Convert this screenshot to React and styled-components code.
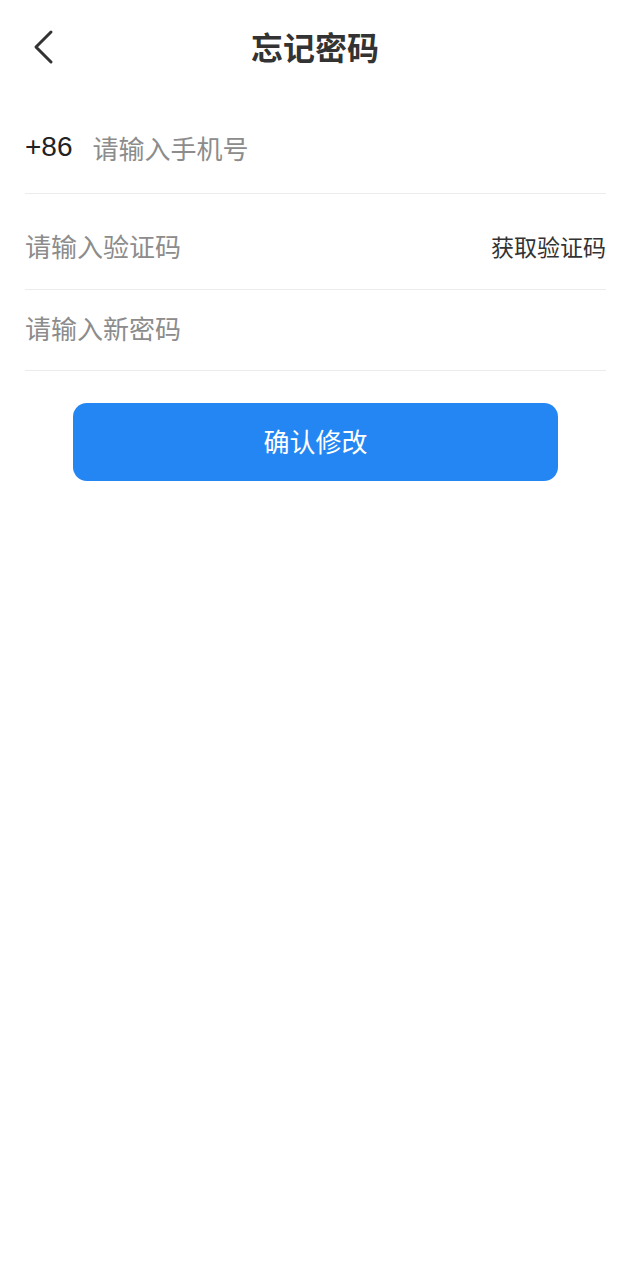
import React, { useState } from "react";
import styled, { createGlobalStyle } from "styled-components";

const GlobalStyle = createGlobalStyle`
  html, body {
    margin: 0;
    padding: 0;
    background: #fff;
    font-family: "Noto Sans CJK SC", "Noto Sans", sans-serif;
  }
`;

const Page = styled.div`
  width: 630px;
  min-height: 1280px;
  background: #fff;
`;

const Header = styled.header`
  position: relative;
  height: 96px;
  padding-bottom: 4px;
  box-sizing: border-box;
  display: flex;
  align-items: center;
  justify-content: center;
`;

const BackButton = styled.button`
  position: absolute;
  left: 24px;
  top: 23px;
  width: 40px;
  height: 48px;
  padding: 0;
  border: none;
  background: none;
  display: flex;
  align-items: center;
  justify-content: center;
`;

const Title = styled.h1`
  margin: 0;
  font-size: 32px;
  font-weight: 700;
  color: #333;
`;

const Form = styled.form`
  padding: 0 24px 0 25px;
`;

const Row = styled.div`
  display: flex;
  align-items: center;
  height: ${(p) => p.$h}px;
  padding-top: ${(p) => p.$pt || 0}px;
  padding-bottom: ${(p) => p.$pb || 0}px;
  box-sizing: border-box;
  border-bottom: 1px solid #ececec;
`;

const Prefix = styled.span`
  font-family: "Liberation Sans", Arial, sans-serif;
  font-size: 28px;
  color: #222;
  margin-right: 20px;
`;

const Field = styled.input`
  flex: 1;
  min-width: 0;
  border: none;
  outline: none;
  padding: 0;
  background: transparent;
  font-family: "Noto Sans CJK SC", "Noto Sans", sans-serif;
  font-size: 26px;
  color: #333;

  &::placeholder {
    color: #8c8c8c;
  }
`;

const CodeLink = styled.button`
  border: none;
  background: none;
  padding: 0;
  font-family: "Noto Sans CJK SC", "Noto Sans", sans-serif;
  font-size: 23px;
  color: #333;
`;

const Submit = styled.button`
  display: block;
  margin: 32px auto 0;
  width: 485px;
  height: 78px;
  border: none;
  border-radius: 14px;
  background: #2386f2;
  color: #fff;
  font-family: "Noto Sans CJK SC", "Noto Sans", sans-serif;
  font-size: 26px;
  font-weight: 400;
  padding-bottom: 4px;
`;

const App = () => {
  const [phone, setPhone] = useState("");
  const [code, setCode] = useState("");
  const [pwd, setPwd] = useState("");

  return (
    <>
      <GlobalStyle />
      <Page>
        <Header>
          <BackButton type="button" aria-label="back">
            <svg width="24" height="36" viewBox="0 0 24 36">
              <path d="M19 3 L4 18 L19 33" fill="none" stroke="#333" strokeWidth="3" strokeLinecap="round" strokeLinejoin="round" />
            </svg>
          </BackButton>
          <Title>忘记密码</Title>
        </Header>

        <Form onSubmit={(e) => e.preventDefault()}>
          <Row $h={98} $pt={5}>
            <Prefix>+86</Prefix>
            <Field
              placeholder="请输入手机号"
              value={phone}
              onChange={(e) => setPhone(e.target.value)}
            />
          </Row>
          <Row $h={96} $pt={8}>
            <Field
              placeholder="请输入验证码"
              value={code}
              onChange={(e) => setCode(e.target.value)}
            />
            <CodeLink type="button">获取验证码</CodeLink>
          </Row>
          <Row $h={81} $pb={6}>
            <Field
              type="password"
              placeholder="请输入新密码"
              value={pwd}
              onChange={(e) => setPwd(e.target.value)}
            />
          </Row>
          <Submit type="submit">确认修改</Submit>
        </Form>
      </Page>
    </>
  );
};

export default App;
